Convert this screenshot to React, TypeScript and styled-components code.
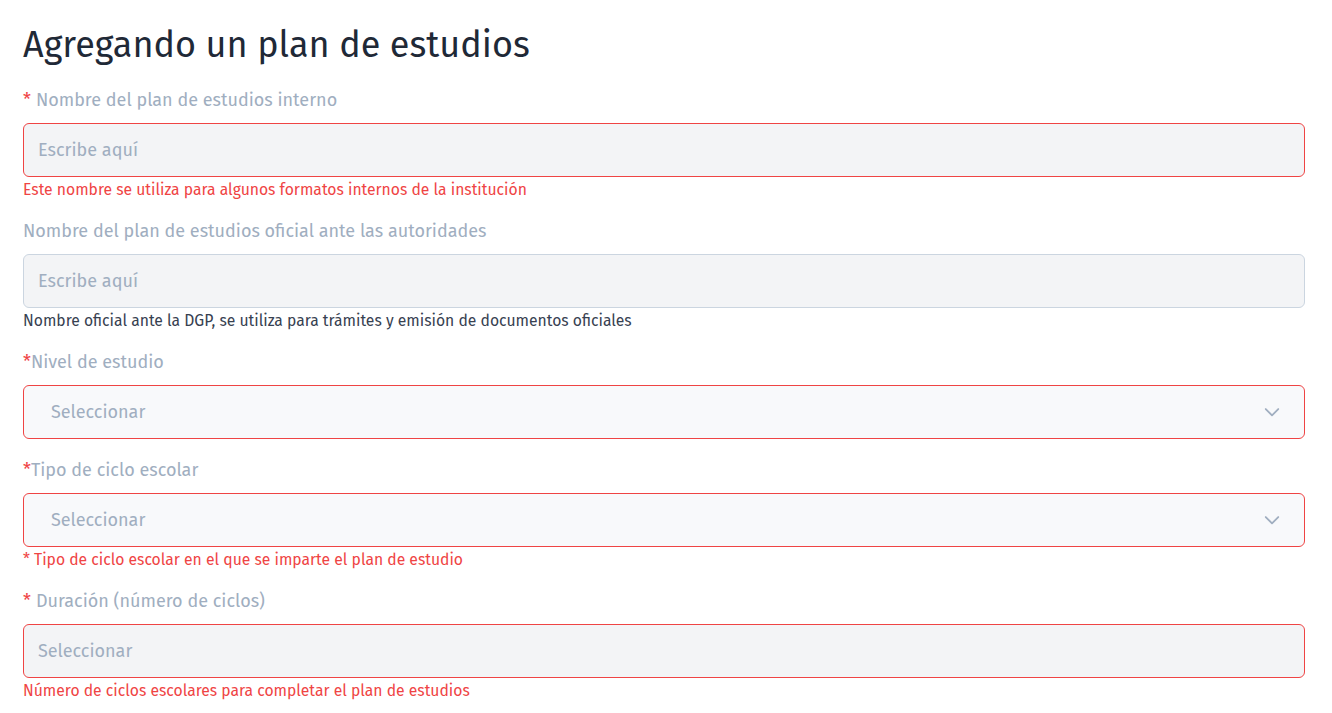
import React from 'react';
import styled, { createGlobalStyle } from 'styled-components';

const GlobalStyle = createGlobalStyle`
  body {
    margin: 0;
    background: #ffffff;
    font-family: "Fira Sans", Roboto, "Liberation Sans", sans-serif;
  }
`;

const Page = styled.div`
  padding: 24px 27px 0 23px;
`;

const Title = styled.h1`
  margin: 0 0 20px;
  font-size: 36px;
  line-height: 43px;
  font-weight: 400;
  color: #1f2937;
`;

const Field = styled.div`
  margin-bottom: 18px;
`;

const Label = styled.label`
  display: block;
  padding-top: 1px;
  margin-bottom: 11px;
  font-size: 18px;
  line-height: 24px;
  color: #a0aec0;
`;

const Star = styled.span<{ $spaced?: boolean }>`
  color: #ef4444;
  margin-right: ${p => (p.$spaced ? '5px' : '0')};
`;

const Input = styled.input<{ $error?: boolean }>`
  box-sizing: border-box;
  display: block;
  width: 100%;
  height: 54px;
  padding: 0 14px;
  font-family: inherit;
  font-size: 18px;
  color: #374151;
  background: #f3f4f6;
  border: 1px solid ${p => (p.$error ? '#ef4444' : '#cbd5e0')};
  border-radius: 6px;
  outline: none;
  &::placeholder {
    color: #a0aec0;
  }
`;

const SelectBox = styled.div<{ $error?: boolean }>`
  box-sizing: border-box;
  display: flex;
  align-items: center;
  justify-content: space-between;
  height: 54px;
  padding: 0 22px 0 27px;
  font-size: 18px;
  color: #a0aec0;
  background: #f8f9fb;
  border: 1px solid ${p => (p.$error ? '#ef4444' : '#cbd5e0')};
  border-radius: 6px;
`;

const Help = styled.div<{ $error?: boolean; $last?: boolean }>`
  margin-top: 2px;
  margin-bottom: ${p => (p.$last ? '1px' : '0')};
  font-size: 15.7px;
  line-height: 21px;
  color: ${p => (p.$error ? '#ef4444' : '#374151')};
`;

const Chevron = () => (
  <svg width="20" height="20" viewBox="0 0 24 24" fill="none" stroke="#a0aec0" strokeWidth="2.2" strokeLinecap="round" strokeLinejoin="round">
    <path d="M4.5 8.5l7.5 7.5 7.5-7.5" />
  </svg>
);

const Select = ({ error }: { error?: boolean }) => (
  <SelectBox $error={error}>
    <span>Seleccionar</span>
    <Chevron />
  </SelectBox>
);

export default function App() {
  return (
    <Page>
      <GlobalStyle />
      <Title>Agregando un plan de estudios</Title>

      <Field>
        <Label>
          <Star $spaced>*</Star>Nombre del plan de estudios interno
        </Label>
        <Input $error placeholder="Escribe aquí" />
        <Help $error>Este nombre se utiliza para algunos formatos internos de la institución</Help>
      </Field>

      <Field>
        <Label>Nombre del plan de estudios oficial ante las autoridades</Label>
        <Input placeholder="Escribe aquí" />
        <Help>Nombre oficial ante la DGP, se utiliza para trámites y emisión de documentos oficiales</Help>
      </Field>

      <Field>
        <Label>
          <Star>*</Star>Nivel de estudio
        </Label>
        <Select error />
      </Field>

      <Field>
        <Label>
          <Star>*</Star>Tipo de ciclo escolar
        </Label>
        <Select error />
        <Help $error $last>* Tipo de ciclo escolar en el que se imparte el plan de estudio</Help>
      </Field>

      <Field>
        <Label>
          <Star $spaced>*</Star>Duración (número de ciclos)
        </Label>
        <Input $error placeholder="Seleccionar" />
        <Help $error>Número de ciclos escolares para completar el plan de estudios</Help>
      </Field>
    </Page>
  );
}
